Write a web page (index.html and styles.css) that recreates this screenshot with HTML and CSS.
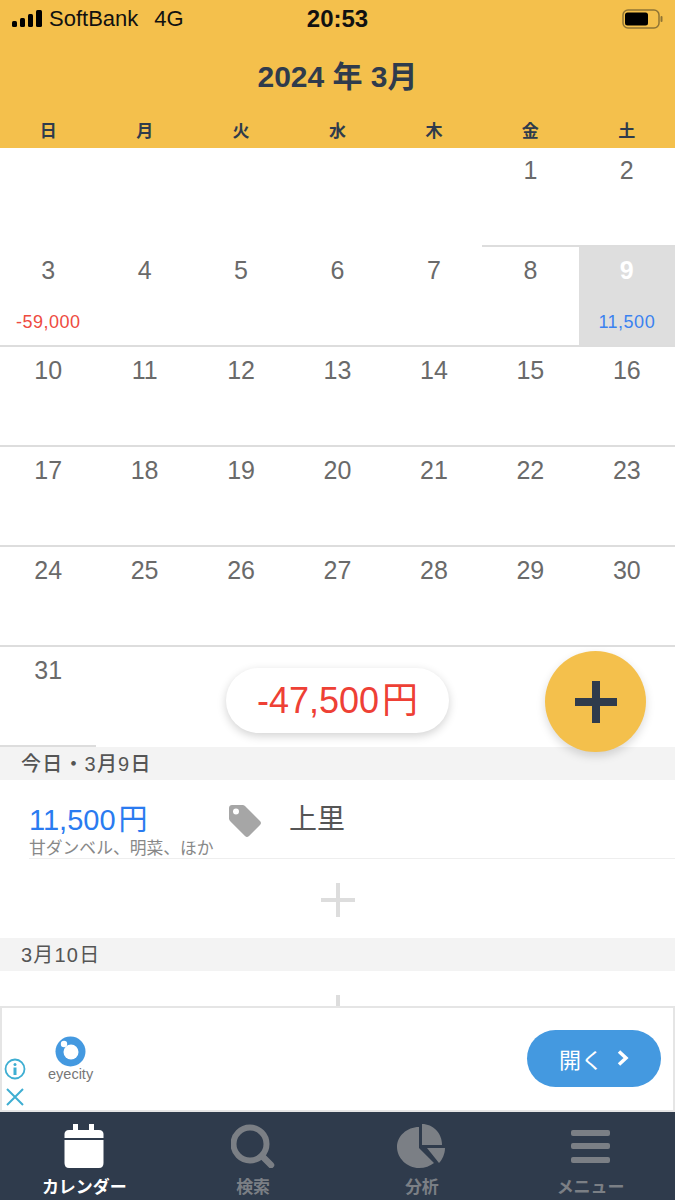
FILE: index.html
```html
<!DOCTYPE html>
<html lang="ja">
<head>
    <meta charset="UTF-8">
    <meta name="viewport" content="width=device-width, initial-scale=1.0">
    <title>カレンダー</title>
    <link rel="stylesheet" href="styles.css">
</head>
<body>
<div class="app">
    <header class="top">
        <div class="status">
            <svg class="signal" width="31" height="18" viewBox="0 0 31 18">
                <rect x="0" y="11" width="5" height="6" rx="1.500"/>
                <rect x="8" y="8" width="5" height="9" rx="1.500"/>
                <rect x="16" y="4" width="5" height="13" rx="1.500"/>
                <rect x="24" y="0" width="6" height="17" rx="1.500"/>
            </svg>
            <span class="carrier">SoftBank</span>
            <span class="network">4G</span>
            <span class="clock">20:53</span>
            <svg class="battery" width="41" height="20" viewBox="0 0 41 20">
                <rect x="1" y="1" width="36" height="18" rx="5" fill="none" stroke="#8f7434" stroke-width="1.500"/>
                <rect x="3" y="3.500" width="23" height="13" rx="2.500" fill="#000"/>
                <rect x="38.500" y="7" width="2" height="6" rx="1" fill="#8f7434"/>
            </svg>
        </div>
        <h1 class="month">2024 年 3月</h1>
        <div class="weekdays">
            <span>日</span><span>月</span><span>火</span><span>水</span><span>木</span><span>金</span><span>土</span>
        </div>
    </header>

    <main class="content">
        <div class="calendar">
            <div class="day empty"></div>
            <div class="day empty"></div>
            <div class="day empty"></div>
            <div class="day empty"></div>
            <div class="day empty"></div>
            <div class="day"><span class="num">1</span></div>
            <div class="day"><span class="num">2</span></div>

            <div class="day"><span class="num">3</span><span class="amount minus">-59,000</span></div>
            <div class="day"><span class="num">4</span></div>
            <div class="day"><span class="num">5</span></div>
            <div class="day"><span class="num">6</span></div>
            <div class="day"><span class="num">7</span></div>
            <div class="day"><span class="num">8</span></div>
            <div class="day selected"><span class="num">9</span><span class="amount plus">11,500</span></div>

            <div class="day"><span class="num">10</span></div>
            <div class="day"><span class="num">11</span></div>
            <div class="day"><span class="num">12</span></div>
            <div class="day"><span class="num">13</span></div>
            <div class="day"><span class="num">14</span></div>
            <div class="day"><span class="num">15</span></div>
            <div class="day"><span class="num">16</span></div>

            <div class="day"><span class="num">17</span></div>
            <div class="day"><span class="num">18</span></div>
            <div class="day"><span class="num">19</span></div>
            <div class="day"><span class="num">20</span></div>
            <div class="day"><span class="num">21</span></div>
            <div class="day"><span class="num">22</span></div>
            <div class="day"><span class="num">23</span></div>

            <div class="day"><span class="num">24</span></div>
            <div class="day"><span class="num">25</span></div>
            <div class="day"><span class="num">26</span></div>
            <div class="day"><span class="num">27</span></div>
            <div class="day"><span class="num">28</span></div>
            <div class="day"><span class="num">29</span></div>
            <div class="day"><span class="num">30</span></div>

            <div class="day"><span class="num">31</span></div>
        </div>

        <section class="list">
            <h2 class="list-date">今日・3月9日</h2>
            <div class="entry">
                <div class="entry-money">
                    <div class="entry-price">11,500<span class="yen">円</span></div>
                    <div class="entry-note">甘ダンベル、明菜、ほか</div>
                </div>
                <svg class="tag" width="32" height="32" viewBox="0 0 32 32">
                    <path fill-rule="evenodd" fill="#a6a6a6" d="M3 0H13.500C14.500 0 15.300 .4 16 1L31 16C32.300 17.300 32.300 18.700 31 20L20 31C18.700 32.300 17.300 32.300 16 31L1 16C.4 15.300 0 14.500 0 13.500V3C0 1.300 1.300 0 3 0ZM7 3.500A3 3 0 1 0 7 9.500A3 3 0 1 0 7 3.500Z"/>
                </svg>
                <span class="entry-shop">上里</span>
            </div>
            <div class="add-row"><span class="add-mark"></span></div>
            <h2 class="list-date date-plain">3月10日</h2>
            <div class="add-row"><span class="add-mark"></span></div>
        </section>

        <div class="total">-47,500<span class="yen">円</span></div>
        <button class="fab" type="button" aria-label="追加"><span class="fab-mark"></span></button>
    </main>

    <aside class="ad">
        <div class="ad-marks">
            <svg width="22" height="22" viewBox="0 0 22 22">
                <circle cx="11" cy="11" r="9.500" fill="none" stroke="#3eaed2" stroke-width="1.800"/>
                <circle cx="11" cy="6.500" r="1.500" fill="#3eaed2"/>
                <rect x="9.500" y="9.500" width="3" height="7.500" fill="#3eaed2"/>
            </svg>
            <svg width="20" height="20" viewBox="0 0 20 20">
                <path d="M2 2L18 18M18 2L2 18" stroke="#3eaed2" stroke-width="2" fill="none"/>
            </svg>
        </div>
        <div class="ad-logo">
            <svg width="31" height="31" viewBox="0 0 31 31">
                <circle cx="15.500" cy="15.500" r="15" fill="#4499e0"/>
                <circle cx="16" cy="16" r="7.500" fill="#fff"/>
                <circle cx="9" cy="8" r="3.200" fill="#fff"/>
            </svg>
            <span class="ad-name">eyecity</span>
        </div>
        <a class="ad-open">
            <span>開く</span>
            <svg width="12" height="18" viewBox="0 0 12 18">
                <path d="M2 2.500L9 9L2 15.500" fill="none" stroke="#fff" stroke-width="3.500"/>
            </svg>
        </a>
    </aside>

    <nav class="tabs">
        <a class="tab active">
            <svg class="tab-icon" width="40" height="44" viewBox="0 0 40 44">
                <path fill="#fff" d="M9 0H14V6H25V0H30V6H35C38 6 39.500 8 39.500 10V14H.5V10C.5 8 2 6 5 6H9Z"/>
                <path fill="#fff" d="M.5 16H39.500V39C39.500 42 38 44 35 44H5C2 44 .5 42 .5 39Z"/>
            </svg>
            <span>カレンダー</span>
        </a>
        <a class="tab">
            <svg class="tab-icon" width="44" height="44" viewBox="0 0 44 44">
                <circle cx="19" cy="20" r="16.500" fill="none" stroke="#7b7f85" stroke-width="6"/>
                <path d="M31 32L40 41" fill="none" stroke="#7b7f85" stroke-width="6.500" stroke-linecap="round"/>
            </svg>
            <span>検索</span>
        </a>
        <a class="tab">
            <svg class="tab-icon" width="49" height="44" viewBox="0 0 49 44">
                <path fill="#7b7f85" d="M22 3V24L37 39C33 42 28 44 22 44C10 44 0 34 0 23C0 12 10 3 22 3Z"/>
                <path fill="#7b7f85" d="M25 0C36 0 45 9 45 21H25Z"/>
                <path fill="#7b7f85" d="M30 24H48C48 30 45 36 42 39Z"/>
            </svg>
            <span>分析</span>
        </a>
        <a class="tab">
            <svg class="tab-icon" width="39" height="44" viewBox="0 0 39 44">
                <rect x="0" y="6" width="39" height="6" rx="2" fill="#7b7f85"/>
                <rect x="0" y="19" width="39" height="6" rx="2" fill="#7b7f85"/>
                <rect x="0" y="33" width="39" height="6" rx="2" fill="#7b7f85"/>
            </svg>
            <span>メニュー</span>
        </a>
    </nav>
</div>
</body>
</html>
```

FILE: styles.css
```css
html, body {
    margin: 0;
    padding: 0;
}
body {
    font-family: "Liberation Sans", "Noto Sans CJK JP", sans-serif;
    background-color: #fff;
    color: #555;
}
.app {
    display: flex;
    flex-direction: column;
    height: 1200px;
    overflow: hidden;
}

/* yellow header */
.top {
    background-color: #f4c04c;
    height: 148px;
    flex: none;
    display: flex;
    flex-direction: column;
}
.status {
    display: flex;
    align-items: center;
    height: 38px;
    padding: 0 12px;
    color: #111;
    font-size: 22px;
    position: relative;
}
.signal {
    margin-right: 6px;
}
.network {
    margin-left: 16px;
}
.clock {
    font-weight: bold;
    font-size: 24px;
    position: absolute;
    left: 0;
    right: 0;
    text-align: center;
}
.battery {
    margin-left: auto;
}
.month {
    margin: 0;
    height: 78px;
    line-height: 78px;
    text-align: center;
    font-size: 30px;
    font-weight: bold;
    color: #2f3b4c;
}
.weekdays {
    display: grid;
    grid-template-columns: repeat(7, 1fr);
    text-align: center;
    font-size: 17px;
    font-weight: bold;
    color: #2f3b4c;
    line-height: 32px;
}

/* calendar + list */
.content {
    flex: 1;
    position: relative;
    overflow: hidden;
}
.calendar {
    display: grid;
    grid-template-columns: repeat(7, 1fr);
    grid-template-rows: 99px repeat(5, 100px);
}
.day {
    box-sizing: border-box;
    border-bottom: 2px solid #ddd;
    display: flex;
    flex-direction: column;
    align-items: center;
    padding-top: 8px;
}
.day:nth-child(-n+7) {
    padding-top: 7px;
}
.day.empty {
    border-bottom: none;
}
.num {
    font-size: 25px;
    line-height: 30px;
    color: #6a6a6a;
}
.amount {
    font-size: 18px;
    letter-spacing: 0.5px;
    line-height: 20px;
    margin-top: 27px;
}
.minus {
    color: #ee4b40;
}
.plus {
    color: #3b82f0;
}
.selected {
    background-color: #dedede;
}
.selected .num {
    color: #fff;
    font-weight: bold;
}

.list-date {
    margin: 0;
    height: 33px;
    line-height: 34px;
    background-color: #f3f3f3;
    padding-left: 21px;
    font-size: 20px;
    letter-spacing: 1.2px;
    font-weight: 500;
    color: #555;
}
.date-plain {
    font-weight: normal;
}
.entry {
    display: flex;
    align-items: flex-start;
    height: 79px;
    box-sizing: border-box;
    margin-left: 29px;
    padding-top: 23px;
    border-bottom: 1px solid #eee;
}
.entry-money {
    width: 200px;
}
.entry-price {
    font-size: 29px;
    line-height: 34px;
    color: #2a7bf0;
}
.yen {
    margin-left: 3px;
}
.entry-note {
    font-size: 16.800px;
    line-height: 20px;
    color: #888;
    white-space: nowrap;
    margin-top: 2px;
}
.tag {
    margin-top: 2px;
}
.entry-shop {
    font-size: 28px;
    line-height: 34px;
    margin-left: 28px;
}
.add-row {
    height: 79px;
    display: flex;
    align-items: center;
    justify-content: center;
}
.add-mark {
    width: 34px;
    height: 34px;
    margin-top: 3px;
    background:
        linear-gradient(#ddd, #ddd) center / 34px 4px no-repeat,
        linear-gradient(#ddd, #ddd) center / 4px 34px no-repeat;
}

/* floating on top of the calendar */
.total {
    position: absolute;
    left: 226px;
    top: 520px;
    width: 223px;
    height: 65px;
    line-height: 65px;
    border-radius: 33px;
    background-color: #fff;
    box-shadow: 0 3px 10px rgba(0,0,0,0.18);
    text-align: center;
    font-size: 36px;
    color: #ee4035;
}
.fab {
    position: absolute;
    left: 545px;
    top: 503px;
    width: 101px;
    height: 101px;
    border: none;
    border-radius: 50%;
    background-color: #f4c04c;
    box-shadow: 0 4px 10px rgba(0,0,0,0.15);
    display: flex;
    align-items: center;
    justify-content: center;
}
.fab-mark {
    width: 42px;
    height: 42px;
    background:
        linear-gradient(#2f3b4c, #2f3b4c) center / 42px 8px no-repeat,
        linear-gradient(#2f3b4c, #2f3b4c) center / 8px 42px no-repeat;
}

/* ad */
.ad {
    flex: none;
    box-sizing: border-box;
    height: 106px;
    border: 2px solid #e5e5e5;
    background-color: #fff;
    display: flex;
    align-items: center;
    padding: 0 12px 2px 0;
}
.ad-marks {
    align-self: flex-end;
    display: flex;
    flex-direction: column;
    align-items: center;
    gap: 7px;
    padding-bottom: 1px;
    width: 26px;
}
.ad-logo {
    display: flex;
    flex-direction: column;
    align-items: center;
    margin-left: 20px;
    margin-top: 1px;
}
.ad-name {
    font-size: 14.500px;
    color: #777;
    line-height: 16px;
    margin-top: -1px;
}
.ad-open {
    margin-left: auto;
    width: 134px;
    height: 57px;
    border-radius: 29px;
    background-color: #4499e0;
    color: #fff;
    font-size: 22px;
    display: flex;
    align-items: center;
    justify-content: center;
    gap: 14px;
}

/* bottom tabs */
.tabs {
    flex: none;
    height: 88px;
    background-color: #2f3b4c;
    display: grid;
    grid-template-columns: repeat(4, 1fr);
}
.tab {
    display: flex;
    flex-direction: column;
    align-items: center;
    padding-top: 12px;
    font-size: 17px;
    font-weight: bold;
    color: #7b7f85;
    line-height: 24px;
}
.tab span {
    margin-top: 8px;
}
.tab.active {
    color: #fff;
}
```
